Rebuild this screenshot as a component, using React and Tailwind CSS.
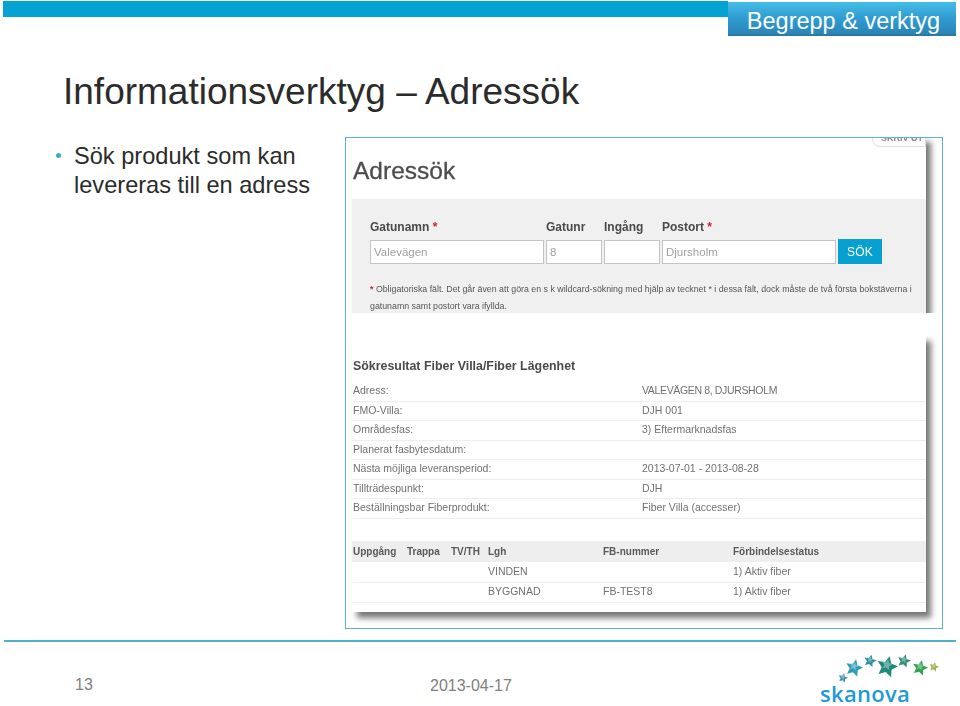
const resultRows = [
  ['Adress:', 'VALEVÄGEN 8, DJURSHOLM', 'tracking-[-0.35px]'],
  ['FMO-Villa:', 'DJH 001', ''],
  ['Områdesfas:', '3) Eftermarknadsfas', ''],
  ['Planerat fasbytesdatum:', '', ''],
  ['Nästa möjliga leveransperiod:', '2013-07-01 - 2013-08-28', ''],
  ['Tillträdespunkt:', 'DJH', ''],
  ['Beställningsbar Fiberprodukt:', 'Fiber Villa (accesser)', ''],
]

const stars = [
  { x: 27, y: 36, r: 5, c: '#3f8fb8' },
  { x: 38, y: 26, r: 9, c: '#2a9db8' },
  { x: 54, y: 19, r: 6.5, c: '#2b8fa0' },
  { x: 71, y: 25, r: 11, c: '#1f8a7c' },
  { x: 88, y: 19, r: 7, c: '#2f8f78' },
  { x: 104, y: 26, r: 8, c: '#35a050' },
  { x: 118, y: 25, r: 5, c: '#9cb050' },
]

function starPoints(cx, cy, r) {
  const pts = []
  for (let i = 0; i < 10; i++) {
    const rad = i % 2 === 0 ? r : r * 0.48
    const a = -Math.PI / 2 + 0.25 + (i * Math.PI) / 5
    pts.push(`${(cx + rad * Math.cos(a)).toFixed(1)},${(cy + rad * Math.sin(a)).toFixed(1)}`)
  }
  return pts.join(' ')
}

function Field({ label, required, value, width }) {
  return (
    <div className={`flex flex-col ${width}`}>
      <div className="h-[21px] pt-[1px] text-[12px] leading-[15px] font-bold text-[#4a4a4a] whitespace-nowrap">
        {label} {required && <span className="text-[#d02030]">*</span>}
      </div>
      <div className="h-[24px] border border-[#c4c4c4] bg-white pl-[3px] text-[11.5px] leading-[22px] text-[#a0a0a0]">
        {value}
      </div>
    </div>
  )
}

function SearchCard() {
  return (
    <div className="h-[175px] overflow-hidden pr-[16px] pl-[6px] shrink-0">
      <div className="relative h-[220px] bg-white shadow-[5px_4px_6px_#777] blur-[0.35px]">
        <div className="absolute right-0 top-[-8px] h-[17px] w-[54px] rounded-bl-[8px] border border-[#ddd] bg-white pl-[6px] text-center text-[9px] leading-[14px] font-bold text-[#888] whitespace-nowrap">
          SKRIV UT
        </div>
        <div className="h-[61px] pl-[1px] pt-[18px] text-[24.5px] leading-[30px] text-[#4c4c4c] [-webkit-text-stroke:0.3px_#4c4c4c]">Adressök</div>
        <div className="h-[159px] bg-[#f0f0f0] pl-[18px] pt-[20px]">
          <div className="flex items-end gap-[2px]">
            <Field label="Gatunamn" required value="Valevägen" width="w-[174px]" />
            <Field label="Gatunr" value="8" width="w-[56px]" />
            <Field label="Ingång" value="" width="w-[56px]" />
            <Field label="Postort" required value="Djursholm" width="w-[174px]" />
            <div className="flex h-[25px] w-[44px] items-center justify-center bg-[#08a0d0] text-[12px] font-medium tracking-wide text-white">SÖK</div>
          </div>
          <p className="mt-[17px] w-[556px] text-[8.8px] leading-[17px] text-[#555]">
            <span className="text-[#d02030] font-bold">*</span> Obligatoriska fält. Det går även att göra en s k wildcard-sökning med hjälp av tecknet * i dessa fält, dock måste de två första bokstäverna i gatunamn samt postort vara ifyllda.
          </p>
        </div>
      </div>
    </div>
  )
}

function ResultCard() {
  return (
    <div className="ml-[6px] mr-[16px] mt-[22px] h-[277px] bg-white shadow-[5px_6px_6px_#777] blur-[0.35px] text-[10.5px] text-[#707070]">
      <div className="h-[47px] pl-[1px] pt-[22px] text-[12.4px] leading-[18px] font-bold text-[#4a4a4a]">Sökresultat Fiber Villa/Fiber Lägenhet</div>
      {resultRows.map(([label, value, extra]) => (
        <div key={label} className="flex h-[19.5px] items-center border-b border-[#eeeeee] pl-[1px] first:border-t">
          <div className="w-[289px]">{label}</div>
          <div className={extra}>{value}</div>
        </div>
      ))}
      <div className="mt-[22px] flex h-[21px] items-center bg-[#eeeeee] pl-[1px] text-[10px] font-bold text-[#5a5a5a]">
        <div className="w-[54px]">Uppgång</div>
        <div className="w-[44px]">Trappa</div>
        <div className="w-[37px]">TV/TH</div>
        <div className="w-[115px]">Lgh</div>
        <div className="w-[130px]">FB-nummer</div>
        <div>Förbindelsestatus</div>
      </div>
      <div className="mt-[1px] flex h-[20px] items-center border-b border-[#eeeeee] pl-[136px]">
        <div className="w-[115px]">VINDEN</div>
        <div className="w-[130px]"></div>
        <div>1) Aktiv fiber</div>
      </div>
      <div className="flex h-[20px] items-center border-b border-[#eeeeee] pl-[136px]">
        <div className="w-[115px]">BYGGNAD</div>
        <div className="w-[130px]">FB-TEST8</div>
        <div>1) Aktiv fiber</div>
      </div>
    </div>
  )
}

export default function App() {
  return (
    <div className="flex h-[706px] w-[960px] flex-col overflow-hidden bg-white font-['Liberation_Sans',Arial,sans-serif]">
      <div className="flex h-[37px] pl-[3px] pr-[4px] pt-[1px]">
        <div className="h-[16px] flex-1 bg-[#04a3d3]"></div>
        <div className="mt-[1px] flex h-[34px] w-[228px] items-center justify-center border-b-2 border-[#2a7aa5] bg-gradient-to-b from-[#45bde8] via-[#2f9cd0] to-[#2a85b8] pl-[3px] pt-[5px] text-[23.5px] leading-[26px] text-white">
          Begrepp &amp; verktyg
        </div>
      </div>

      <h1 className="mt-[33px] h-[44px] pl-[63px] text-[37px] leading-[44px] text-[#2b2b2b] whitespace-nowrap">
        Informationsverktyg – Adressök
      </h1>

      <div className="mt-[23px] flex h-[492px] shrink-0 pr-[17px]">
        <div className="flex w-[345px] shrink-0 items-start pl-[56px] pt-[5px]">
          <span className="mt-[11px] mr-[13px] h-[5px] w-[5px] shrink-0 rounded-full bg-[#3fa9c4]"></span>
          <p className="text-[23.6px] leading-[28.5px] text-[#2b2b2b]">
            Sök produkt som kan levereras till en adress
          </p>
        </div>
        <div className="flex-1 border border-[#5fb3c8] bg-white">
          <SearchCard />
          <ResultCard />
        </div>
      </div>

      <div className="ml-[4px] mr-[4px] mt-[11px] h-[2px] shrink-0 bg-[#4fb0c6]"></div>

      <div className="flex flex-1 items-start">
        <div className="w-[430px] shrink-0 pl-[75px] pt-[33px] text-[16px] leading-[20px] text-[#808080]">13</div>
        <div className="w-[386px] shrink-0 pt-[34px] text-[16px] leading-[20px] text-[#808080]">2013-04-17</div>
        <div className="flex w-[140px] flex-col">
          <svg width="140" height="44" viewBox="0 0 140 44" className="h-[44px] w-[140px]">
            {stars.map((s) => (
              <g key={s.x}>
                <polygon points={starPoints(s.x, s.y, s.r)} fill={s.c} />
                <polygon points={starPoints(s.x, s.y - s.r * 0.2, s.r * 0.5)} fill="#ffffff" opacity="0.35" />
              </g>
            ))}
          </svg>
          <div className="-mt-[3px] pl-[4px] font-['Open_Sans',sans-serif] text-[22px] leading-[20px] font-semibold tracking-[0.3px] text-[#1e9ad6]">skanova</div>
        </div>
      </div>
    </div>
  )
}
